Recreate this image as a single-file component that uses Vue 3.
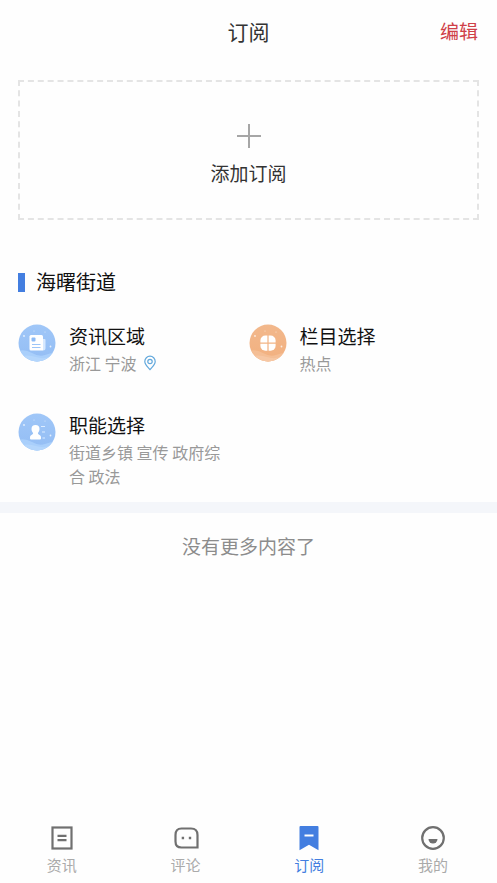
<script setup>
const items = [
  { id: 'region', title: '资讯区域', detail: '浙江 宁波', pin: true },
  { id: 'column', title: '栏目选择', detail: '热点' },
  { id: 'duty', title: '职能选择', detail: '街道乡镇 宣传 政府综合 政法' },
]
const tabs = [
  { id: 'news', label: '资讯' },
  { id: 'comment', label: '评论' },
  { id: 'subscribe', label: '订阅', active: true },
  { id: 'mine', label: '我的' },
]
</script>

<template>
  <div class="page">
    <header class="header">
      <h1 class="title">订阅</h1>
      <button type="button" class="edit">编辑</button>
    </header>

    <main class="content">
      <button type="button" class="add">
        <svg class="plus" viewBox="0 0 26 26" aria-hidden="true">
          <path d="M13 1v24M1 13h24" fill="none" stroke="#a6a6a6" stroke-width="2" />
        </svg>
        <span>添加订阅</span>
      </button>

      <section class="group">
        <h2 class="group-title">海曙街道</h2>
        <div class="grid">
          <article v-for="item in items" :key="item.id" class="item">
            <svg class="badge" viewBox="0 0 38 38" aria-hidden="true">
              <defs>
                <linearGradient :id="'fill-' + item.id" x1="0" y1="0" x2="0" y2="1">
                  <stop offset="0" :stop-color="item.id === 'column' ? '#f2b88c' : '#a0c7f8'" />
                  <stop offset="1" :stop-color="item.id === 'column' ? '#f2b07f' : '#93bdf4'" />
                </linearGradient>
                <clipPath :id="'clip-' + item.id"><circle cx="19" cy="19" r="18.5" /></clipPath>
              </defs>
              <g :clip-path="'url(#clip-' + item.id + ')'">
                <rect width="38" height="38" :fill="'url(#fill-' + item.id + ')'" />
                <path d="M0 27Q7 25 14 29T27 31T38 28V38H0Z" :fill="item.id === 'column' ? '#f4be95' : '#a9cffb'" />
                <path d="M0 33Q9 30 18 33T38 31V38H0Z" :fill="item.id === 'column' ? '#f6c7a4' : '#b4d6fc'" />
              </g>
              <g fill="#fff" opacity=".75">
                <circle cx="6" cy="12" r=".9" />
                <circle cx="32.500" cy="22.500" r=".9" />
                <circle cx="27" cy="8" r=".5" />
                <circle cx="16" cy="7" r=".5" />
              </g>
              <g v-if="item.id === 'region'">
                <path d="M25 15h1.500q1 0 1 1v8q0 2.500-2.500 2.500Z" fill="#d7e9ff" />
                <path d="M13 11h10.500q1.500 0 1.500 1.500V26.500H13q-1.500 0-1.500-1.500V12.500q0-1.500 1.500-1.500Z" fill="#fff" />
                <rect x="13.500" y="13.500" width="4" height="4" rx="1" fill="#8dbbf5" />
                <path d="M14 20.500h8.500M14 23.500h8.500" stroke="#9cc5f8" stroke-width="1.200" />
              </g>
              <g v-else-if="item.id === 'column'" fill="#fff">
                <path d="M18.400 11.500v7h-7v-2a5 5 0 0 1 5-5Z" />
                <path d="M19.600 11.500h2a5 5 0 0 1 5 5v2h-7Z" />
                <path d="M11.400 19.700h7v7h-2a5 5 0 0 1-5-5Z" />
                <path d="M19.600 19.700h7v2a5 5 0 0 1-5 5h-2Z" />
              </g>
              <g v-else>
                <path d="M17.500 12a4 4 0 0 1 4 4c0 1.700-.8 3.100-1.600 4.100 0 1.100.8 1.500 2 2.100q1.100.6 1.100 2.200v1q0 1.100-1.100 1.100H13.100q-1.100 0-1.100-1.100v-1q0-1.600 1.100-2.200c1.200-.6 2-1 2-2.100-.8-1-1.600-2.400-1.600-4.100a4 4 0 0 1 4-4Z" fill="#fff" />
                <path d="M23 13.500h4M24 19h3M24.500 25h2.500" stroke="#dcecff" stroke-width="1.200" />
              </g>
            </svg>
            <div class="text">
              <h3 class="item-title">{{ item.title }}</h3>
              <p class="detail">
                <span>{{ item.detail }}</span>
                <svg v-if="item.pin" class="pin" viewBox="0 0 14 16" aria-hidden="true">
                  <path d="M7 1.200a5.200 5.200 0 0 1 5.200 5.200C12.200 9.800 9 12 7 14.600 5 12 1.800 9.800 1.800 6.400A5.200 5.200 0 0 1 7 1.200Z" fill="none" stroke="#62a8dc" stroke-width="1.200" />
                  <circle cx="7" cy="6.500" r="2.200" fill="none" stroke="#62a8dc" stroke-width="1.200" />
                </svg>
              </p>
            </div>
          </article>
        </div>
      </section>

      <p class="end">没有更多内容了</p>
    </main>

    <nav class="tabs">
      <a v-for="tab in tabs" :key="tab.id" :href="'#' + tab.id" class="tab" :class="{ active: tab.active }">
        <svg class="tab-icon" viewBox="0 0 26 26" aria-hidden="true">
          <g v-if="tab.id === 'news'" fill="none" stroke="#707070" stroke-width="2.200">
            <rect x="3.500" y="2.500" width="19" height="21" />
            <path d="M8.500 10.800h9M8.500 15.200h9" />
          </g>
          <g v-else-if="tab.id === 'comment'">
            <path d="M8.500 3.500h9.500q6.500 0 6.500 6.500V22.500H8.500Q2.500 22.500 2.500 16.500V10Q2.500 3.500 8.500 3.500Z" fill="none" stroke="#707070" stroke-width="2.200" />
            <path d="M8.700 11.800h2.400v2.400h-2.400ZM15.800 11.800h2.400v2.400h-2.400Z" fill="#707070" />
          </g>
          <g v-else-if="tab.id === 'subscribe'">
            <path d="M4.500 1h17q1 0 1 1v23.300L13 19.800 3.500 25.300V2q0-1 1-1Z" fill="#437ee0" />
            <path d="M8.500 10.500h9" stroke="#fff" stroke-width="2" />
          </g>
          <g v-else>
            <circle cx="13" cy="13" r="10.800" fill="none" stroke="#707070" stroke-width="2.200" />
            <path d="M8.500 14h9a4.500 4.500 0 0 1-9 0Z" fill="#707070" />
          </g>
        </svg>
        <span>{{ tab.label }}</span>
      </a>
    </nav>
  </div>
</template>

<style>
body {
  margin: 0;
  background: #fefefe;
}
</style>

<style scoped>
.page {
  display: flex;
  flex-direction: column;
  min-height: 100vh;
  font-family: "Noto Sans CJK SC", sans-serif;
  color: #333;
}
h1,
h2,
h3,
p {
  margin: 0;
  font-weight: 400;
}
button {
  padding: 0;
  border: 0;
  background: none;
  font: inherit;
  cursor: pointer;
}
.header {
  display: grid;
  grid-template-columns: 1fr auto 1fr;
  align-items: center;
  height: 62px;
  padding: 0 19px;
}
.title {
  grid-column: 2;
  font-size: 21px;
  line-height: 30px;
}
.edit {
  justify-self: end;
  font-size: 19px;
  line-height: 28px;
  color: #cf4048;
}
.content {
  flex: 1;
}
.add {
  display: flex;
  flex-direction: column;
  align-items: center;
  justify-content: center;
  gap: 10px;
  width: calc(100% - 36px);
  height: 140px;
  margin: 18px 18px 0;
  padding-top: 10px;
  border: 2px dashed #e4e4e4;
  font-size: 19px;
  line-height: 28px;
  color: #333;
}
.plus {
  width: 26px;
  height: 26px;
}
.group {
  padding: 46px 18px 14px;
  border-bottom: 11px solid #f4f6fa;
}
.group-title {
  display: flex;
  align-items: center;
  gap: 11px;
  font-size: 20px;
  line-height: 32px;
  color: #111;
}
.group-title::before {
  content: "";
  width: 7px;
  height: 19px;
  background: #437ee0;
}
.grid {
  display: grid;
  grid-template-columns: 1fr 1fr;
  row-gap: 36px;
  margin-top: 24px;
}
.item {
  display: flex;
  gap: 13px;
  padding-right: 18px;
}
.badge {
  flex: none;
  width: 38px;
  height: 38px;
  margin-top: 2px;
}
.item-title {
  font-size: 19px;
  line-height: 28px;
  color: #111;
}
.detail {
  display: flex;
  align-items: center;
  gap: 6px;
  margin-top: 1px;
  font-size: 16px;
  line-height: 24px;
  color: #999;
}
.pin {
  width: 14px;
  height: 16px;
}
.end {
  padding: 19px 18px;
  font-size: 19px;
  line-height: 28px;
  text-align: center;
  color: #8c8c8c;
}
.tabs {
  position: sticky;
  bottom: 0;
  display: grid;
  grid-template-columns: repeat(4, 1fr);
  padding: 0 2px 6px 0;
  background: #fefefe;
}
.tab {
  display: flex;
  flex-direction: column;
  align-items: center;
  gap: 2px;
  font-size: 15px;
  line-height: 24px;
  color: #aaa;
  text-decoration: none;
}
.tab.active {
  color: #437ee0;
}
.tab-icon {
  width: 26px;
  height: 26px;
}
</style>
